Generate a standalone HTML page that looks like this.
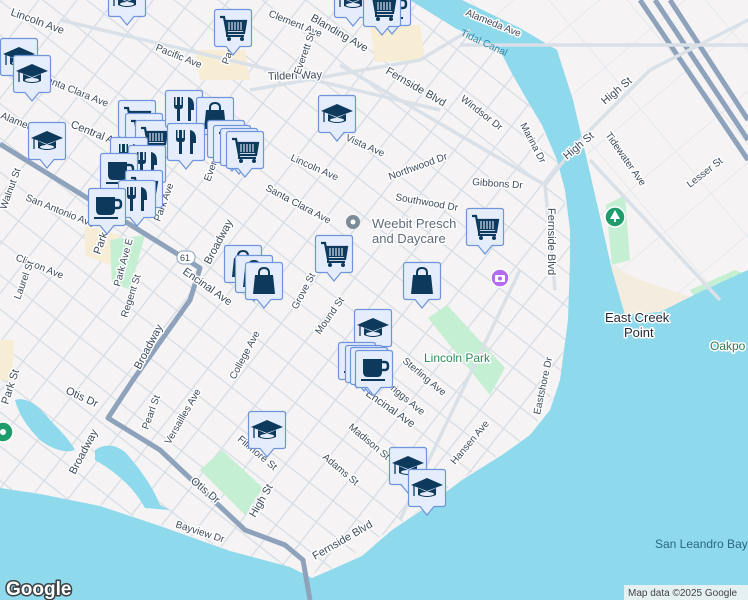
<!DOCTYPE html>
<html><head><meta charset="utf-8"><style>
html,body{margin:0;padding:0;width:748px;height:600px;overflow:hidden;background:#f5f3f3}
svg{display:block}
text{font-family:"Liberation Sans",sans-serif;font-size:11px;fill:#3f4b5b;paint-order:stroke;stroke:#fff;stroke-width:3px;stroke-linejoin:round}
</style></head><body>
<svg width="748" height="600" viewBox="0 0 748 600" xmlns="http://www.w3.org/2000/svg">
<defs>
<pattern id="grid" patternUnits="userSpaceOnUse" width="30" height="27" patternTransform="rotate(38)">
<rect width="30" height="27" fill="#f5f3f3"/>
<path d="M0 0H30M0 0V27" stroke="#d6dde5" stroke-width="2.6"/>
</pattern>
<pattern id="grid2" patternUnits="userSpaceOnUse" width="60" height="55" patternTransform="rotate(-40)">
<rect width="60" height="55" fill="#f5f3f3"/>
<path d="M0 0H60M0 0V55" stroke="#e2e6eb" stroke-width="1.6"/>
</pattern>
<symbol id="box" viewBox="0 0 38 48" overflow="visible">
<path d="M3 0.5H35Q37.5 0.5 37.5 3V35Q37.5 37.5 35 37.5H26L19 46L12 37.5H3Q0.5 37.5 0.5 35V3Q0.5 0.5 3 0.5Z" fill="#e5edfc" stroke="#6e95dc" stroke-width="1.2"/>
</symbol>
<symbol id="cart" viewBox="0 0 38 48" overflow="visible">
<use href="#box" width="38" height="48"/>
<path d="M6 8H10L13 24H30L32 12H11" fill="none" stroke="#0d3a5c" stroke-width="2.2"/>
<path d="M12 12H32L30 22H13Z" fill="#0d3a5c"/>
<path d="M15 13V21M18 13V21M21 13V21M24 13V21M27 13V21" stroke="#e5edfc" stroke-width="1.1"/>
<path d="M13 24V27H30" fill="none" stroke="#0d3a5c" stroke-width="2"/>
<circle cx="15" cy="30" r="2" fill="#0d3a5c"/><circle cx="28" cy="30" r="2" fill="#0d3a5c"/>
</symbol>
<symbol id="school" viewBox="0 0 38 48" overflow="visible">
<use href="#box" width="38" height="48"/>
<path d="M19 9L35 16L19 22L3 16Z" fill="#0d3a5c"/>
<path d="M10 19V26Q19 30 28 26V19L19 23Z" fill="#0d3a5c"/>
<ellipse cx="19" cy="25" rx="7" ry="2" fill="#e5edfc"/>
<path d="M6 17V27" stroke="#0d3a5c" stroke-width="1.3"/>
</symbol>
<symbol id="cup" viewBox="0 0 38 48" overflow="visible">
<use href="#box" width="38" height="48"/>
<path d="M8 9H27V22Q27 27 22 27H13Q8 27 8 22Z" fill="#0d3a5c"/>
<path d="M27 12H30Q33 12 33 16Q33 20 30 20H27" fill="none" stroke="#0d3a5c" stroke-width="2.5"/>
<rect x="6" y="29" width="24" height="2" fill="#0d3a5c"/>
</symbol>
<symbol id="fork" viewBox="0 0 38 48" overflow="visible">
<use href="#box" width="38" height="48"/>
<path d="M9 7V16Q9 19 12 19V31H15V19Q18 19 18 16V7H16.5V15H15V7H12V15H10.5V7Z" fill="#0d3a5c"/>
<path d="M23 31V7Q29 8 29 16V20H26V31Z" fill="#0d3a5c"/>
</symbol>
<symbol id="bag" viewBox="0 0 38 48" overflow="visible">
<use href="#box" width="38" height="48"/>
<path d="M14 14V11Q14 6 19 6Q24 6 24 11V14" fill="none" stroke="#0d3a5c" stroke-width="2"/>
<path d="M10 13H28L30 32H8Z" fill="#0d3a5c"/>
</symbol>
</defs>

<rect width="748" height="600" fill="url(#grid2)"/>
<path d="M0 0H413L460 30L500 50L527 100L557 160L570 230L570 300L560 380L530 435L460 480L390 530L330 570L300 575L230 550L160 525L100 505L0 488Z" fill="url(#grid)"/>
<path d="M370 25L420 25L425 60L375 62Z" fill="#f7edd5"/>
<path d="M195 50L245 50L250 80L200 80Z" fill="#f7edd5"/>
<path d="M85 225L120 235L110 265L85 255Z" fill="#f7edd5"/>
<path d="M0 340L14 340L12 380L0 380Z" fill="#f7edd5"/>
<path d="M428 318L447 305L505 368L490 395Z" fill="#c4efd2"/>
<path d="M200 470L222 450L263 488L245 515Z" fill="#c4efd2"/>
<path d="M110 240L145 235L130 290L112 282Z" fill="#c4efd2"/>
<path d="M606 205L625 195L630 260L612 265Z" fill="#c4efd2"/>
<path d="M690 290L735 270L748 275L748 300L700 305Z" fill="#c4efd2"/>
<path d="M610 265L640 280L700 300L660 318L625 322Z" fill="#f3ecdf"/>
<path d="M410 0H462L520 28L557 50L573 100L587 160L603 230L612 270L625 315L660 312L700 292L748 270V600H0V488L40 494L100 506L160 526L230 551L290 567L312 578L335 568L362 556L392 530L422 510L462 480L502 455L530 435L550 410L560 380L568 320L570 260L570 230L565 190L557 160L542 125L527 100L510 70L500 50L455 28Z" fill="#8fd9ec"/>
<path d="M15 400Q30 395 50 420Q70 440 75 450Q60 455 40 440Q20 420 15 400Z" fill="#8fd9ec"/>
<path d="M95 450Q110 440 125 452Q150 480 160 505L170 510L145 508Q130 480 95 460Z" fill="#8fd9ec"/>
<path d="M640 0L748 160M655 0L748 140M670 0L748 120" stroke="#8ea3bb" stroke-width="5"/>
<path d="M0 144L200 268L190 300L133 380L108 418L160 450L245 530L285 545L303 560L310 600" fill="none" stroke="#8ea3bb" stroke-width="5" stroke-linejoin="round"/>
<path d="M60 20L440 110M250 90L420 60L470 30M340 65L545 185L580 140L650 70L748 20M545 185L555 290M460 45L748 45M590 160L720 300M520 270L400 520" fill="none" stroke="#d9e0e8" stroke-width="3.5"/>
<rect x="177" y="251" width="18" height="13" rx="6" fill="#fff" stroke="#8ea3bb"/>
<text x="180" y="261" style="font-size:9px;stroke-width:0">61</text>

<text x="10" y="15" transform="rotate(20 10 15)">Lincoln Ave</text>
<text x="155" y="50" transform="rotate(22 155 50)" style="font-size:10px">Pacific Ave</text>
<text x="268" y="16" transform="rotate(22 268 16)" style="font-size:10px">Clement Ave</text>
<text x="268" y="80" transform="rotate(-2 268 80)">Tilden Way</text>
<text x="70" y="127" transform="rotate(22 70 127)">Central Ave</text>
<text x="40" y="80" transform="rotate(22 40 80)" style="font-size:10px">Santa Clara Ave</text>
<text x="0" y="118" transform="rotate(22 0 118)" style="font-size:10px">Alameda Ave</text>
<text x="25" y="200" transform="rotate(22 25 200)" style="font-size:10px">San Antonio Ave</text>
<text x="15" y="260" transform="rotate(22 15 260)" style="font-size:10px">Clinton Ave</text>
<text x="6" y="210" transform="rotate(-70 6 210)" style="font-size:10px">Walnut St</text>
<text x="20" y="300" transform="rotate(-70 20 300)" style="font-size:10px">Laurel St</text>
<text x="265" y="190" transform="rotate(28 265 190)" style="font-size:10px">Santa Clara Ave</text>
<text x="290" y="160" transform="rotate(24 290 160)" style="font-size:10px">Lincoln Ave</text>
<text x="345" y="140" transform="rotate(24 345 140)" style="font-size:10px">Vista Ave</text>
<text x="385" y="73" transform="rotate(30 385 73)">Fernside Blvd</text>
<text x="460" y="100" transform="rotate(38 460 100)" style="font-size:10px">Windsor Dr</text>
<text x="520" y="125" transform="rotate(62 520 125)" style="font-size:10px">Marina Dr</text>
<text x="390" y="180" transform="rotate(-20 390 180)" style="font-size:10px">Northwood Dr</text>
<text x="472" y="185" transform="rotate(4 472 185)" style="font-size:10px">Gibbons Dr</text>
<text x="395" y="200" transform="rotate(10 395 200)" style="font-size:10px">Southwood Dr</text>
<text x="548" y="208" transform="rotate(90 548 208)">Fernside Blvd</text>
<text x="567" y="160" transform="rotate(-40 567 160)">High St</text>
<text x="605" y="105" transform="rotate(-40 605 105)">High St</text>
<text x="605" y="135" transform="rotate(55 605 135)" style="font-size:10px">Tidewater Ave</text>
<text x="690" y="188" transform="rotate(-38 690 188)" style="font-size:10px">Lesser St</text>
<text x="465" y="15" transform="rotate(22 465 15)" style="font-size:10px">Alameda Ave</text>
<text x="460" y="35" transform="rotate(25 460 35)" style="font-size:10px;fill:#2e8aa8;stroke:none">Tidal Canal</text>
<text x="605" y="322" style="font-size:13px;fill:#1f2a36">East Creek</text>
<text x="624" y="337" style="font-size:13px;fill:#1f2a36">Point</text>
<text x="710" y="350" style="font-size:12px;fill:#2e7d55">Oakpo</text>
<text x="655" y="548" style="font-size:12px;fill:#2b6782;stroke:none">San Leandro Bay</text>
<text x="372" y="228" style="font-size:13px;fill:#5f6b78">Weebit Presch</text>
<text x="372" y="243" style="font-size:13px;fill:#5f6b78">and Daycare</text>
<text x="424" y="362" style="font-size:12px;fill:#2e8a5a">Lincoln Park</text>
<text x="210" y="265" transform="rotate(-62 210 265)">Broadway</text>
<text x="140" y="370" transform="rotate(-62 140 370)">Broadway</text>
<text x="75" y="475" transform="rotate(-62 75 475)">Broadway</text>
<text x="182" y="273" transform="rotate(35 182 273)">Encinal Ave</text>
<text x="365" y="395" transform="rotate(35 365 395)">Encinal Ave</text>
<text x="120" y="287" transform="rotate(-75 120 287)" style="font-size:10px">Park Ave E</text>
<text x="127" y="318" transform="rotate(-72 127 318)" style="font-size:10px">Regent St</text>
<text x="148" y="430" transform="rotate(-70 148 430)" style="font-size:10px">Pearl St</text>
<text x="170" y="445" transform="rotate(-60 170 445)" style="font-size:10px">Versailles Ave</text>
<text x="235" y="380" transform="rotate(-62 235 380)" style="font-size:10px">College Ave</text>
<text x="297" y="310" transform="rotate(-62 297 310)" style="font-size:10px">Grove St</text>
<text x="320" y="335" transform="rotate(-55 320 335)" style="font-size:10px">Mound St</text>
<text x="402" y="362" transform="rotate(40 402 362)" style="font-size:10px">Sterling Ave</text>
<text x="385" y="385" transform="rotate(40 385 385)" style="font-size:10px">Briggs Ave</text>
<text x="348" y="428" transform="rotate(40 348 428)" style="font-size:10px">Madison St</text>
<text x="322" y="458" transform="rotate(40 322 458)" style="font-size:10px">Adams St</text>
<text x="237" y="440" transform="rotate(40 237 440)" style="font-size:10px">Fillmore St</text>
<text x="255" y="518" transform="rotate(-60 255 518)">High St</text>
<text x="190" y="482" transform="rotate(40 190 482)">Otis Dr</text>
<text x="65" y="393" transform="rotate(25 65 393)">Otis Dr</text>
<text x="175" y="527" transform="rotate(18 175 527)" style="font-size:10px">Bayview Dr</text>
<text x="315" y="560" transform="rotate(-30 315 560)">Fernside Blvd</text>
<text x="455" y="465" transform="rotate(-50 455 465)" style="font-size:10px">Hansen Ave</text>
<text x="540" y="415" transform="rotate(-78 540 415)" style="font-size:10px">Eastshore Dr</text>
<text x="8" y="405" transform="rotate(-72 8 405)">Park St</text>
<text x="100" y="255" transform="rotate(-70 100 255)">Park St</text>
<text x="160" y="222" transform="rotate(-70 160 222)" style="font-size:10px">Park Ave</text>
<text x="210" y="182" transform="rotate(-70 210 182)" style="font-size:10px">Everett St</text>
<text x="300" y="75" transform="rotate(-70 300 75)" style="font-size:10px">Everett St</text>
<text x="228" y="65" transform="rotate(-70 228 65)" style="font-size:10px">Park St</text>
<text x="310" y="20" transform="rotate(30 310 20)">Blanding Ave</text>

<circle cx="353" cy="222" r="7" fill="#7b8b99"/><circle cx="353" cy="222" r="2.5" fill="#fff"/>
<circle cx="500" cy="278" r="9" fill="#b36cf0" stroke="#fff" stroke-width="1.5"/><rect x="495" y="275" width="10" height="7" rx="1" fill="#fff"/><circle cx="500" cy="278.5" r="2" fill="#b36cf0"/>
<circle cx="615" cy="217" r="10" fill="#1f9c6c" stroke="#fff" stroke-width="1.5"/><path d="M615 210L620 219H610Z" fill="#fff"/><rect x="614" y="219" width="2" height="3" fill="#fff"/>
<circle cx="3" cy="432" r="10" fill="#1f9c6c" stroke="#fff" stroke-width="1.5"/><circle cx="3" cy="432" r="3" fill="#fff"/>

<use href="#school" x="108" y="-21" width="38" height="48"/>
<use href="#school" x="334" y="-20" width="38" height="48"/>
<use href="#cup" x="373" y="-12" width="38" height="48"/>
<use href="#cart" x="363" y="-11" width="38" height="48"/>
<use href="#cart" x="214" y="9" width="38" height="48"/>
<use href="#school" x="0" y="38" width="38" height="48"/>
<use href="#school" x="13" y="55" width="38" height="48"/>
<use href="#school" x="28" y="122" width="38" height="48"/>
<use href="#school" x="318" y="95" width="38" height="48"/>
<use href="#cart" x="118" y="100" width="38" height="48"/>
<use href="#cart" x="125" y="113" width="38" height="48"/>
<use href="#cart" x="135" y="120" width="38" height="48"/>
<use href="#fork" x="165" y="90" width="38" height="48"/>
<use href="#bag" x="196" y="97" width="38" height="48"/>
<use href="#fork" x="167" y="123" width="38" height="48"/>
<use href="#cart" x="207" y="120" width="38" height="48"/>
<use href="#cart" x="213" y="125" width="38" height="48"/>
<use href="#cart" x="220" y="128" width="38" height="48"/>
<use href="#cart" x="226" y="131" width="38" height="48"/>
<use href="#fork" x="110" y="137" width="38" height="48"/>
<use href="#fork" x="128" y="145" width="38" height="48"/>
<use href="#cup" x="100" y="153" width="38" height="48"/>
<use href="#cart" x="125" y="170" width="38" height="48"/>
<use href="#fork" x="118" y="180" width="38" height="48"/>
<use href="#cup" x="88" y="188" width="38" height="48"/>
<use href="#bag" x="224" y="245" width="38" height="48"/>
<use href="#bag" x="235" y="255" width="38" height="48"/>
<use href="#bag" x="245" y="262" width="38" height="48"/>
<use href="#cart" x="315" y="235" width="38" height="48"/>
<use href="#cart" x="466" y="208" width="38" height="48"/>
<use href="#bag" x="403" y="262" width="38" height="48"/>
<use href="#school" x="354" y="309" width="38" height="48"/>
<use href="#cup" x="338" y="342" width="38" height="48"/>
<use href="#cup" x="345" y="345" width="38" height="48"/>
<use href="#cup" x="350" y="347" width="38" height="48"/>
<use href="#cup" x="355" y="350" width="38" height="48"/>
<use href="#school" x="248" y="411" width="38" height="48"/>
<use href="#school" x="389" y="447" width="38" height="48"/>
<use href="#school" x="408" y="469" width="38" height="48"/>

<text x="6" y="595" style="font-size:19px;font-weight:bold;fill:#fff;stroke:#3c4043;stroke-width:3px">Google</text>
<rect x="624" y="585" width="124" height="15" fill="#f5f3f3" opacity="0.85"/>
<text x="628" y="596" style="font-size:10px;fill:#444;stroke:none">Map data ©2025 Google</text>
</svg>
</body></html>
